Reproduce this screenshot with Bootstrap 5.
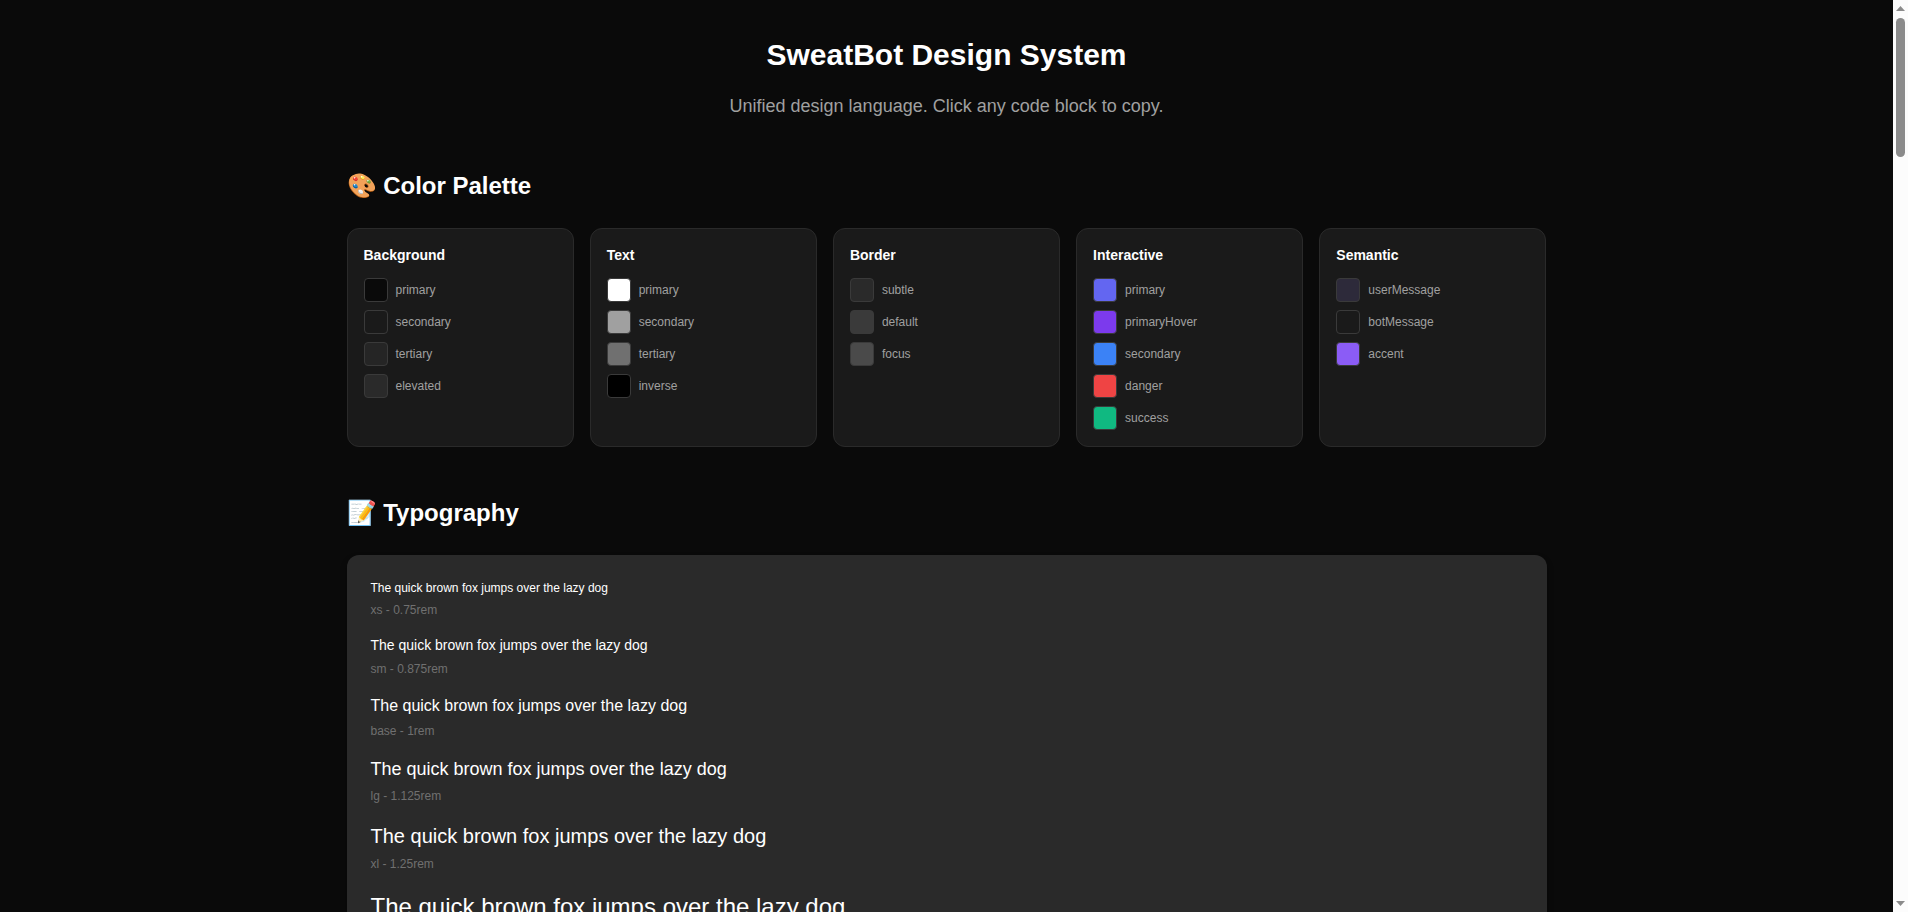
<!DOCTYPE html>
<html lang="en">
<head>
<meta charset="utf-8">
<meta name="viewport" content="width=device-width, initial-scale=1">
<title>SweatBot Design System</title>
<link href="https://cdn.jsdelivr.net/npm/bootstrap@5.3.0/dist/css/bootstrap.min.css" rel="stylesheet">
<style>
  body { background: #0a0a0a; color: #fff; font-family: "Liberation Sans", Arial, sans-serif; line-height: 1.5; }
  .page-inner { width: 1200px; padding-top: 32px; }
  h1 { font-size: 30px; font-weight: 700; line-height: 45px; }
  h2 { font-size: 24px; font-weight: 700; line-height: 36px; }
  h3 { font-size: 14px; font-weight: 700; line-height: 21px; margin-bottom: 12px; }
  .subtitle { font-size: 18px; color: #a0a0a0; }
  .palette { display: grid; grid-template-columns: repeat(5, 1fr); gap: 16px; }
  .palette-card { background: #1a1a1a; border: 1px solid #2a2a2a; border-radius: 12px; padding: 16px; }
  .swatch-name { font-size: 12px; color: #a0a0a0; }
  .swatch { width: 24px; height: 24px; border: 1px solid #3a3a3a; border-radius: 4px; }
  .type-panel { background: #2a2a2a; border-radius: 12px; box-shadow: 0 4px 6px rgba(0, 0, 0, .4); }
  .type-label { font-size: 12px; color: #707070; }
  .scroll-rail { width: 15px; background: #fcfcfc; padding: 6px 3px; }
  .scroll-thumb { width: 9px; height: 139px; margin-top: 7px; border-radius: 5px; background: #8b8b8b; }
</style>
</head>
<body class="d-flex vh-100 overflow-hidden">
<main class="flex-grow-1 overflow-hidden">
  <div class="page-inner mx-auto">
    <header class="text-center mb-5">
      <h1 class="mb-3">SweatBot Design System</h1>
      <p class="subtitle mb-0">Unified design language. Click any code block to copy.</p>
    </header>

    <section class="mb-5">
      <h2 class="mb-4">🎨 Color Palette</h2>
      <div class="palette">
        <div class="palette-card">
          <h3>Background</h3>
          <div class="d-flex flex-column gap-2">
            <div class="d-flex align-items-center gap-2"><span class="swatch" style="background:#0a0a0a"></span><span class="swatch-name">primary</span></div>
            <div class="d-flex align-items-center gap-2"><span class="swatch" style="background:#1a1a1a"></span><span class="swatch-name">secondary</span></div>
            <div class="d-flex align-items-center gap-2"><span class="swatch" style="background:#252525"></span><span class="swatch-name">tertiary</span></div>
            <div class="d-flex align-items-center gap-2"><span class="swatch" style="background:#2a2a2a"></span><span class="swatch-name">elevated</span></div>
          </div>
        </div>
        <div class="palette-card">
          <h3>Text</h3>
          <div class="d-flex flex-column gap-2">
            <div class="d-flex align-items-center gap-2"><span class="swatch" style="background:#ffffff"></span><span class="swatch-name">primary</span></div>
            <div class="d-flex align-items-center gap-2"><span class="swatch" style="background:#a0a0a0"></span><span class="swatch-name">secondary</span></div>
            <div class="d-flex align-items-center gap-2"><span class="swatch" style="background:#707070"></span><span class="swatch-name">tertiary</span></div>
            <div class="d-flex align-items-center gap-2"><span class="swatch" style="background:#000000"></span><span class="swatch-name">inverse</span></div>
          </div>
        </div>
        <div class="palette-card">
          <h3>Border</h3>
          <div class="d-flex flex-column gap-2">
            <div class="d-flex align-items-center gap-2"><span class="swatch" style="background:#2a2a2a"></span><span class="swatch-name">subtle</span></div>
            <div class="d-flex align-items-center gap-2"><span class="swatch" style="background:#3a3a3a"></span><span class="swatch-name">default</span></div>
            <div class="d-flex align-items-center gap-2"><span class="swatch" style="background:#4a4a4a"></span><span class="swatch-name">focus</span></div>
          </div>
        </div>
        <div class="palette-card">
          <h3>Interactive</h3>
          <div class="d-flex flex-column gap-2">
            <div class="d-flex align-items-center gap-2"><span class="swatch" style="background:#6366f1"></span><span class="swatch-name">primary</span></div>
            <div class="d-flex align-items-center gap-2"><span class="swatch" style="background:#7c3aed"></span><span class="swatch-name">primaryHover</span></div>
            <div class="d-flex align-items-center gap-2"><span class="swatch" style="background:#3b82f6"></span><span class="swatch-name">secondary</span></div>
            <div class="d-flex align-items-center gap-2"><span class="swatch" style="background:#ef4444"></span><span class="swatch-name">danger</span></div>
            <div class="d-flex align-items-center gap-2"><span class="swatch" style="background:#10b981"></span><span class="swatch-name">success</span></div>
          </div>
        </div>
        <div class="palette-card">
          <h3>Semantic</h3>
          <div class="d-flex flex-column gap-2">
            <div class="d-flex align-items-center gap-2"><span class="swatch" style="background:#2d2a3a"></span><span class="swatch-name">userMessage</span></div>
            <div class="d-flex align-items-center gap-2"><span class="swatch" style="background:#1a1a1a"></span><span class="swatch-name">botMessage</span></div>
            <div class="d-flex align-items-center gap-2"><span class="swatch" style="background:#8b5cf6"></span><span class="swatch-name">accent</span></div>
          </div>
        </div>
      </div>
    </section>

    <section>
      <h2 class="mb-4">📝 Typography</h2>
      <div class="type-panel p-4 d-flex flex-column gap-3">
        <div><div class="mb-1" style="font-size:.75rem">The quick brown fox jumps over the lazy dog</div><div class="type-label">xs - 0.75rem</div></div>
        <div><div class="mb-1" style="font-size:.875rem">The quick brown fox jumps over the lazy dog</div><div class="type-label">sm - 0.875rem</div></div>
        <div><div class="mb-1" style="font-size:1rem">The quick brown fox jumps over the lazy dog</div><div class="type-label">base - 1rem</div></div>
        <div><div class="mb-1" style="font-size:1.125rem">The quick brown fox jumps over the lazy dog</div><div class="type-label">lg - 1.125rem</div></div>
        <div><div class="mb-1" style="font-size:1.25rem">The quick brown fox jumps over the lazy dog</div><div class="type-label">xl - 1.25rem</div></div>
        <div><div class="mb-1" style="font-size:1.5rem">The quick brown fox jumps over the lazy dog</div><div class="type-label">2xl - 1.5rem</div></div>
      </div>
    </section>
  </div>
</main>
<aside class="scroll-rail d-flex flex-column flex-shrink-0" aria-hidden="true">
  <svg class="d-block" width="9" height="5" viewBox="0 0 9 5"><path d="M4.5 0 9 5H0z" fill="#8b8b8b"/></svg>
  <div class="scroll-thumb"></div>
  <svg class="d-block mt-auto" width="9" height="5" viewBox="0 0 9 5"><path d="M0 0h9L4.5 5z" fill="#8b8b8b"/></svg>
</aside>
<script src="https://cdn.jsdelivr.net/npm/bootstrap@5.3.0/dist/js/bootstrap.bundle.min.js"></script>
</body>
</html>
